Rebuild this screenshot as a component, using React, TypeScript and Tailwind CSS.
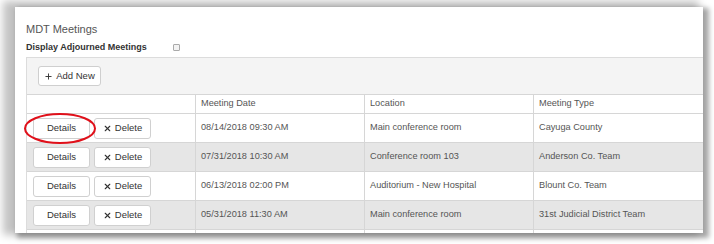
import { X, Plus } from 'lucide-react'

const meetings = [
  { date: '08/14/2018 09:30 AM', location: 'Main conference room', type: 'Cayuga County' },
  { date: '07/31/2018 10:30 AM', location: 'Conference room 103', type: 'Anderson Co. Team' },
  { date: '06/13/2018 02:00 PM', location: 'Auditorium - New Hospital', type: 'Blount Co. Team' },
  { date: '05/31/2018 11:30 AM', location: 'Main conference room', type: '31st Judicial District Team' },
]

const cols = 'grid grid-cols-[168px_169px_169px_1fr]'

export default function App() {
  return (
    <div
      className="relative w-[714px] h-[244px] bg-white pt-[7px] pl-[15px]"
      style={{ fontFamily: '"Liberation Sans", Arial, sans-serif' }}
    >
      {/* Ventana con sombra */}
      <div className="w-[688px] h-[226px] bg-white overflow-hidden pl-[11px] pt-[16px] shadow-[-8px_-2px_8px_4px_rgba(0,0,0,0.24),4px_3px_5px_2px_rgba(0,0,0,0.34)]">
        <h1 className="text-[11px] leading-[13px] text-[#555]">MDT Meetings</h1>
        <div className="mt-[5px] flex items-center text-[9px] leading-[12px] font-bold text-[#333]">
          <span>Display Adjourned Meetings</span>
          <span className="ml-[26px] w-[7px] h-[7px] border border-[#aaa] bg-[#f3f3f3] rounded-[1px]" />
        </div>

        {/* Panel */}
        <div className="mt-[4px] border border-[#dcdcdc] border-r-0 bg-white">
          <div className="h-[36px] bg-[#f4f4f4] pl-[11px] pt-[8px]">
            <button className="flex items-center gap-[3px] h-[20px] w-[63px] justify-center border border-[#cfcfcf] rounded-[3px] bg-white text-[9.5px] text-[#333]">
              <Plus size={9} strokeWidth={2.5} />
              <span>Add New</span>
            </button>
          </div>

          {/* Cabecera */}
          <div className={`${cols} h-[19px] border-t border-[#d6d6d6] text-[9.2px] text-[#555]`}>
            <div />
            <div className="border-l border-[#d6d6d6] pl-[5px] flex items-center">Meeting Date</div>
            <div className="border-l border-[#d6d6d6] pl-[5px] flex items-center">Location</div>
            <div className="border-l border-[#d6d6d6] pl-[5px] flex items-center">Meeting Type</div>
          </div>

          {/* Filas */}
          {meetings.map((m, i) => (
            <div
              key={i}
              className={`${cols} h-[29px] border-t border-[#d6d6d6] text-[9.2px] text-[#555] ${
                i % 2 === 1 ? 'bg-[#e6e6e6]' : 'bg-white'
              }`}
            >
              <div className="flex items-center gap-[4px] pl-[6px]">
                <button className="h-[21px] w-[57px] border border-[#d0d0d0] rounded-[3px] bg-white text-[9.5px] text-[#333]">
                  Details
                </button>
                <button className="h-[21px] w-[57px] flex items-center justify-center gap-[3px] border border-[#d0d0d0] rounded-[3px] bg-white text-[9.5px] text-[#333]">
                  <X size={9} strokeWidth={3} />
                  <span>Delete</span>
                </button>
              </div>
              <div className="border-l border-[#d6d6d6] pl-[5px] flex items-center">{m.date}</div>
              <div className="border-l border-[#d6d6d6] pl-[5px] flex items-center">{m.location}</div>
              <div className="border-l border-[#d6d6d6] pl-[5px] flex items-center">{m.type}</div>
            </div>
          ))}

          {/* Fila cortada por el borde */}
          <div className={`${cols} h-[29px] border-t border-[#d6d6d6] bg-white`}>
            <div className="flex gap-[4px] pl-[6px] pt-[4px]">
              <div className="h-[21px] w-[57px] border border-[#d0d0d0] rounded-[3px] bg-white" />
              <div className="h-[21px] w-[57px] border border-[#d0d0d0] rounded-[3px] bg-white" />
            </div>
            <div className="border-l border-[#d6d6d6]" />
            <div className="border-l border-[#d6d6d6]" />
            <div className="border-l border-[#d6d6d6]" />
          </div>
        </div>
      </div>

      {/* Marca roja */}
      <svg className="absolute left-[23px] top-[112px]" width="74" height="33" viewBox="0 0 74 33">
        <ellipse cx="37" cy="16.5" rx="35" ry="14.5" fill="none" stroke="#e0101a" strokeWidth="2" />
      </svg>
    </div>
  )
}
